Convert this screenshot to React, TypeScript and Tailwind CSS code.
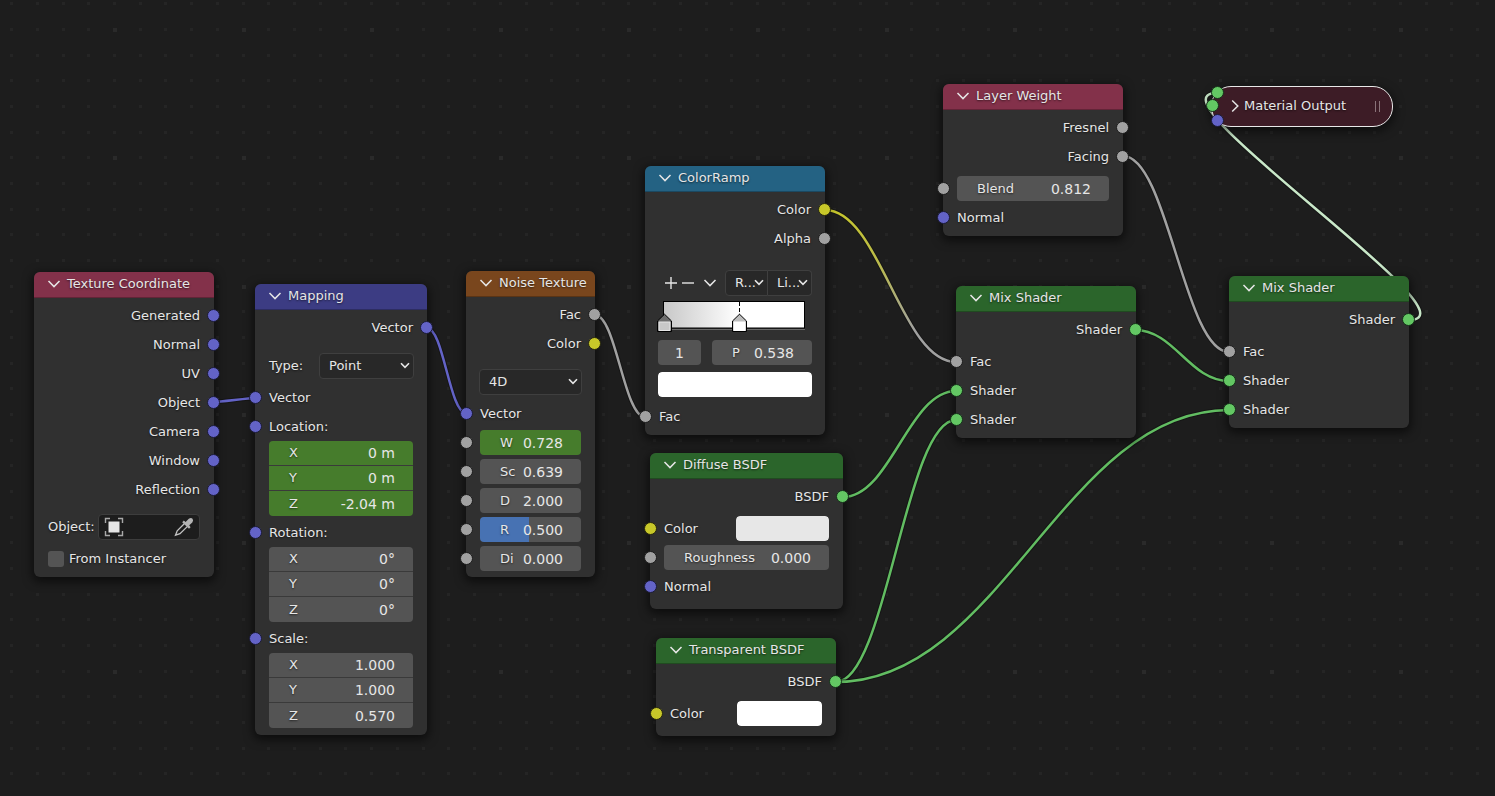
import React from "react";

type Kind = "vector" | "value" | "color" | "shader";

const socketFill: Record<Kind, string> = {
  vector: "bg-[#6363c7] border-[#1b1b36]",
  value: "bg-[#a1a1a1] border-[#1c1c1c]",
  color: "bg-[#c7c729] border-[#26260f]",
  shader: "bg-[#63c763] border-[#16301a]",
};

function Socket({ kind, place }: { kind: Kind; place: string }) {
  return <span className={`absolute z-10 size-[13px] rounded-full border ${socketFill[kind]} ${place}`} />;
}

function Chevron({ className }: { className: string }) {
  return (
    <svg viewBox="0 0 14 8" fill="none" stroke="currentColor" strokeWidth="1.5" className={className} aria-hidden="true">
      <path d="M1.5 1 L7 6.6 L12.5 1" />
    </svg>
  );
}

function Node({ title, place, head, children }: { title: string; place: string; head: string; children: React.ReactNode }) {
  return (
    <section className={`absolute rounded-md bg-[#303030] shadow-[0_3px_10px_2px_rgba(0,0,0,0.55)] ${place}`}>
      <header className={`flex h-[26px] items-center gap-1.5 rounded-t-md border-b border-black/25 pb-px pl-[13px] ${head}`}>
        <button type="button" aria-label={`Collapse ${title}`} className="flex">
          <Chevron className="h-2 w-3.5" />
        </button>
        <h2 className="whitespace-nowrap">{title}</h2>
      </header>
      <div className="flex flex-col pt-[3px]">{children}</div>
    </section>
  );
}

function Output({ label, kind }: { label: string; kind: Kind }) {
  return (
    <div className="relative flex h-[29px] items-center justify-end px-3.5">
      {label}
      <Socket kind={kind} place="-right-1.5" />
    </div>
  );
}

function Input({ kind, children }: { kind: Kind; children: React.ReactNode }) {
  return (
    <div className="relative flex h-[29px] items-center px-3.5">
      <Socket kind={kind} place="-left-1.5" />
      {children}
    </div>
  );
}

function Field({ label, value, className = "rounded bg-[#545454] h-[25px]" }: { label: string; value: string; className?: string }) {
  return (
    <label className={`flex min-w-0 flex-1 items-center pl-5 pr-[18px] ${className}`}>
      <span>{label}</span>
      <input defaultValue={value} className="w-0 min-w-0 flex-1 bg-transparent text-right text-sm outline-none" />
    </label>
  );
}

function Vec({ label, values, fill }: { label: string; values: string[]; fill: string }) {
  const axes = ["X", "Y", "Z"];
  return (
    <div className="flex flex-col">
      <Input kind="vector">{label}</Input>
      <div className="mx-3.5 flex flex-col divide-y divide-[#3a3a3a] overflow-hidden rounded">
        {values.map((v, i) => (
          <Field key={axes[i]} label={axes[i]} value={v} className={`h-[25px] flex-none ${fill}`} />
        ))}
      </div>
    </div>
  );
}

function Menu({ label, options, className }: { label: string; options: string[]; className: string }) {
  return (
    <span className={`relative flex h-[26px] items-center border border-[#3f3f3f] bg-[#282828] ${className}`}>
      <select aria-label={label} className="size-full appearance-none bg-transparent pl-[9px] outline-none">
        {options.map((o) => (
          <option key={o}>{o}</option>
        ))}
      </select>
      <svg viewBox="0 0 10 7" fill="none" stroke="currentColor" strokeWidth="1.6" className="pointer-events-none absolute right-[3px] h-[7px] w-2.5" aria-hidden="true">
        <path d="M1 1.2 L5 5.4 L9 1.2" />
      </svg>
    </span>
  );
}

function Swatch({ label, value, className }: { label: string; value: string; className: string }) {
  return (
    <input
      type="color"
      aria-label={label}
      defaultValue={value}
      className={`h-[25px] appearance-none rounded border-0 bg-transparent p-0 [&::-webkit-color-swatch]:rounded [&::-webkit-color-swatch]:border-0 [&::-webkit-color-swatch-wrapper]:p-0 ${className}`}
    />
  );
}

const STEP = 25.72;

function gridPath(major: boolean) {
  let d = "";
  for (let i = -4; i < 96; i++) {
    for (let j = -1; j < 60; j++) {
      if ((i % 5 === 0 && j % 5 === 0) !== major) continue;
      const x = Math.round(115 + i * STEP) - 2;
      const y = Math.round(30 + j * (STEP - 0.05)) - 2;
      const s = major ? 4 : 3;
      d += `M${x} ${y}h${s}v${s}h${-s}z`;
    }
  }
  return d;
}

const MINOR = gridPath(false);
const MAJOR = gridPath(true);

function link(x1: number, y1: number, x2: number, y2: number, reach = 0.42) {
  const h = Math.abs(x2 - x1) * reach;
  return `M${x1} ${y1}C${x1 + h} ${y1} ${x2 - h} ${y2} ${x2} ${y2}`;
}

const wires = [
  { d: link(214, 402, 255, 398, 0.15), color: "#6363c7" },
  { d: link(427, 328, 466, 413), color: "#6363c7" },
  { d: link(595, 315, 645, 417), color: "#a1a1a1" },
  { d: link(825, 210, 956, 362), color: "url(#fade)" },
  { d: link(1123, 156, 1229, 352), color: "#a1a1a1" },
  { d: link(843, 497, 956, 391), color: "#62bd62" },
  { d: link(836, 682, 956, 420), color: "#62bd62" },
  { d: link(836, 682, 1229, 410), color: "#62bd62" },
  { d: link(1135, 330, 1229, 381), color: "#62bd62" },
  { d: link(1409, 320, 1217, 93, 0.4), color: "#c9e8c9" },
];

function Canvas() {
  return (
    <svg className="absolute inset-0 size-full" fill="none" aria-hidden="true">
      <defs>
        <linearGradient id="fade" gradientUnits="userSpaceOnUse" x1="825" y1="210" x2="956" y2="362">
          <stop offset="0" stopColor="#c7c729" />
          <stop offset="0.35" stopColor="#bcbc48" />
          <stop offset="0.75" stopColor="#a1a1a1" />
        </linearGradient>
      </defs>
      <path d={MINOR} fill="#252525" shapeRendering="crispEdges" />
      <path d={MAJOR} fill="#2a2a2a" shapeRendering="crispEdges" />
      {wires.map((w) => (
        <g key={w.d}>
          <path d={w.d} stroke="#111111" strokeOpacity="0.6" strokeWidth="4.5" />
          <path d={w.d} stroke={w.color} strokeWidth="2.5" />
        </g>
      ))}
    </svg>
  );
}

function Ramp() {
  return (
    <svg viewBox="0 0 154 32" className="mx-[13px] mt-1 h-8 overflow-visible" fill="none" role="img" aria-label="Color ramp">
      <defs>
        <linearGradient id="ramp" x1="0" x2="1" y1="0" y2="0">
          <stop offset="0" stopColor="#c8c8c8" />
          <stop offset="0.538" stopColor="#ffffff" />
        </linearGradient>
      </defs>
      <path d="M5 28.5H147" stroke="#6a6a6a" />
      <rect x="5.5" y="0.5" width="141" height="26.5" fill="url(#ramp)" stroke="#000" />
      <path d="M81.5 1V14" stroke="#000" strokeDasharray="4 2" />
      <path d="M-0.5 20L6.5 13.2L13.5 20V30.5H-0.5z" fill="#6c6c6c" stroke="#000" />
      <path d="M1 21H12V29.5H1z" fill="#c8c8c8" stroke="#e6e6e6" />
      <path d="M74.5 20L81.5 13.2L88.5 20V30.5H74.5z" fill="#bdbdbd" stroke="#000" />
      <path d="M76 21H87V29.5H76z" fill="#fff" stroke="#fff" />
    </svg>
  );
}

function MixShader({ place }: { place: string }) {
  return (
    <Node title="Mix Shader" place={`w-[180px] pb-1 ${place}`} head="bg-[#2b652b]">
      <Output label="Shader" kind="shader" />
      <div className="mt-[3px]">
        <Input kind="value">Fac</Input>
        <Input kind="shader">Shader</Input>
        <Input kind="shader">Shader</Input>
      </div>
    </Node>
  );
}

export default function App() {
  return (
    <main className="relative min-h-screen overflow-hidden bg-[#1d1d1d] font-['DejaVu_Sans',sans-serif] text-[13px] leading-4 text-[#e6e6e6] [text-shadow:0_1px_2px_rgba(0,0,0,0.6)]">
      <Canvas />

      <Node title="Texture Coordinate" place="left-[34px] top-[272px] w-[180px] pb-[6px]" head="bg-[#83314a]">
        {["Generated", "Normal", "UV", "Object", "Camera", "Window", "Reflection"].map((n) => (
          <Output key={n} label={n} kind="vector" />
        ))}
        <div className="mt-[9px] flex h-7 items-center justify-between px-3.5">
          <label htmlFor="object">Object:</label>
          <span className="flex h-[26px] w-[102px] items-center rounded border border-[#3d3d3d] bg-[#1d1d1d] px-[5px]">
            <svg viewBox="0 0 20 20" className="size-5 shrink-0" fill="none" aria-hidden="true">
              <path d="M1.5 6V1.5H6M14 1.5H18.5V6M18.5 14V18.5H14M6 18.5H1.5V14" stroke="#a8a8a8" strokeWidth="1.4" />
              <rect x="4.5" y="4.5" width="11" height="11" fill="#e6e6e6" />
            </svg>
            <input id="object" className="w-0 min-w-0 flex-1 bg-transparent outline-none" />
            <button type="button" aria-label="Pick object" className="flex shrink-0">
              <svg viewBox="0 0 20 20" className="size-5" fill="none" aria-hidden="true">
                <path d="M10.5 6.5L3.2 13.8L1.5 18.2L6 16.6L13.5 9.4" stroke="#c4c4c4" strokeWidth="1.3" />
                <path d="M8.2 5.2L9.8 3.6L11.6 4.9L14.8 1.8Q17 0.4 18.5 1.7Q19.8 3.3 18.3 5.4L15.2 8.3L16.6 10.2L15 11.8Z" fill="#b4b4b4" />
              </svg>
            </button>
          </span>
        </div>
        <label className="mt-1.5 flex h-6 items-center gap-[5px] px-3.5">
          <input type="checkbox" className="size-4 appearance-none rounded-[3px] bg-[#545454] checked:bg-[#4772b3]" />
          From Instancer
        </label>
      </Node>

      <Node title="Mapping" place="left-[255px] top-[284px] w-[172px] pb-[7px]" head="bg-[#3c3c83]">
        <Output label="Vector" kind="vector" />
        <div className="mt-[9px] flex h-[29px] items-center justify-between pl-3.5 pr-[13px]">
          Type:
          <Menu label="Type" options={["Point", "Texture", "Vector", "Normal"]} className="w-[95px] rounded" />
        </div>
        <div className="mt-[3px]">
          <Input kind="vector">Vector</Input>
        </div>
        <div className="flex flex-col gap-0.5">
          <Vec label="Location:" values={["0 m", "0 m", "-2.04 m"]} fill="bg-[#467c2c]" />
          <Vec label="Rotation:" values={["0°", "0°", "0°"]} fill="bg-[#545454]" />
          <Vec label="Scale:" values={["1.000", "1.000", "0.570"]} fill="bg-[#545454]" />
        </div>
      </Node>

      <Node title="Noise Texture" place="left-[466px] top-[271px] w-[129px] pb-1" head="bg-[#79461d]">
        <Output label="Fac" kind="value" />
        <Output label="Color" kind="color" />
        <div className="mt-[9px] flex h-[29px] items-center px-[13px]">
          <Menu label="Dimensions" options={["4D", "3D", "2D", "1D"]} className="flex-1 rounded" />
        </div>
        <div className="mt-[3px]">
          <Input kind="vector">Vector</Input>
          <Input kind="value"><Field label="W" value="0.728" className="h-[25px] rounded bg-[#467c2c]" /></Input>
          <Input kind="value"><Field label="Sc" value="0.639" /></Input>
          <Input kind="value"><Field label="D" value="2.000" /></Input>
          <Input kind="value"><Field label="R" value="0.500" className="h-[25px] rounded bg-[linear-gradient(90deg,#4772b3_49%,#545454_49%)]" /></Input>
          <Input kind="value"><Field label="Di" value="0.000" /></Input>
        </div>
      </Node>

      <Node title="ColorRamp" place="left-[645px] top-[166px] w-[180px] pb-1" head="bg-[#246283]">
        <Output label="Color" kind="color" />
        <Output label="Alpha" kind="value" />
        <div className="mt-[15px] flex h-[29px] items-center justify-between pl-5 pr-[13px]">
          <div className="flex items-center gap-[5px]">
            <button type="button" aria-label="Add stop" className="flex">
              <svg viewBox="0 0 12 12" className="size-3" stroke="currentColor" strokeWidth="1.4" aria-hidden="true"><path d="M0 6H12M6 0V12" /></svg>
            </button>
            <button type="button" aria-label="Remove stop" className="flex">
              <svg viewBox="0 0 12 12" className="size-3" stroke="currentColor" strokeWidth="1.4" aria-hidden="true"><path d="M0 6H12" /></svg>
            </button>
            <button type="button" aria-label="Ramp tools" className="ml-1 flex">
              <Chevron className="h-2 w-3.5" />
            </button>
          </div>
          <div className="flex">
            <Menu label="Color mode" options={["R...", "H..."]} className="w-[43px] rounded-l" />
            <Menu label="Interpolation" options={["Li...", "Ea..."]} className="w-[44px] rounded-r border-l-0" />
          </div>
        </div>
        <Ramp />
        <div className="mt-[5px] flex h-[29px] items-center gap-[11px] px-[13px]">
          <input aria-label="Active stop" defaultValue="1" className="h-[25px] w-[43px] rounded bg-[#545454] text-center text-sm outline-none" />
          <Field label="P" value="0.538" />
        </div>
        <div className="mt-[3px] flex h-[29px] items-center px-[13px]">
          <Swatch label="Stop color" value="#ffffff" className="w-full" />
        </div>
        <div className="mt-[3px]">
          <Input kind="value">Fac</Input>
        </div>
      </Node>

      <Node title="Diffuse BSDF" place="left-[650px] top-[453px] w-[193px] pb-2" head="bg-[#2b652b]">
        <Output label="BSDF" kind="shader" />
        <div className="mt-[3px]">
          <Input kind="color">
            <span className="flex-1">Color</span>
            <Swatch label="Diffuse color" value="#e7e7e7" className="w-[93px]" />
          </Input>
          <Input kind="value"><Field label="Roughness" value="0.000" /></Input>
          <Input kind="vector">Normal</Input>
        </div>
      </Node>

      <Node title="Transparent BSDF" place="left-[656px] top-[638px] w-[180px] pb-2" head="bg-[#2b652b]">
        <Output label="BSDF" kind="shader" />
        <div className="mt-[3px]">
          <Input kind="color">
            <span className="flex-1">Color</span>
            <Swatch label="Transparent color" value="#ffffff" className="w-[85px]" />
          </Input>
        </div>
      </Node>

      <Node title="Layer Weight" place="left-[943px] top-[84px] w-[180px] pb-1" head="bg-[#83314a]">
        <Output label="Fresnel" kind="value" />
        <Output label="Facing" kind="value" />
        <div className="mt-[3px]">
          <Input kind="value"><Field label="Blend" value="0.812" /></Input>
          <Input kind="vector">Normal</Input>
        </div>
      </Node>

      <MixShader place="left-[956px] top-[286px]" />
      <MixShader place="left-[1229px] top-[276px]" />

      <section className="absolute left-[1211px] top-[86px] flex h-[41px] w-[182px] items-center rounded-[20px] border border-[#e8e8e8] bg-[#3d1c26] pb-px pl-[19px] pr-3 shadow-[0_3px_10px_2px_rgba(0,0,0,0.5)]">
        <button type="button" aria-label="Expand Material Output" className="flex">
          <svg viewBox="0 0 8 14" className="h-3.5 w-2" fill="none" stroke="currentColor" strokeWidth="1.5" aria-hidden="true"><path d="M1.2 1.5L6.8 7L1.2 12.5" /></svg>
        </button>
        <h2 className="ml-[5px] flex-1 whitespace-nowrap">Material Output</h2>
        <span className="h-[11px] w-[5px] border-x border-[#8a7379]" />
        <Socket kind="shader" place="-left-px -top-px" />
        <Socket kind="shader" place="-left-1.5 top-3" />
        <Socket kind="vector" place="-left-px top-[27px]" />
      </section>
    </main>
  );
}
